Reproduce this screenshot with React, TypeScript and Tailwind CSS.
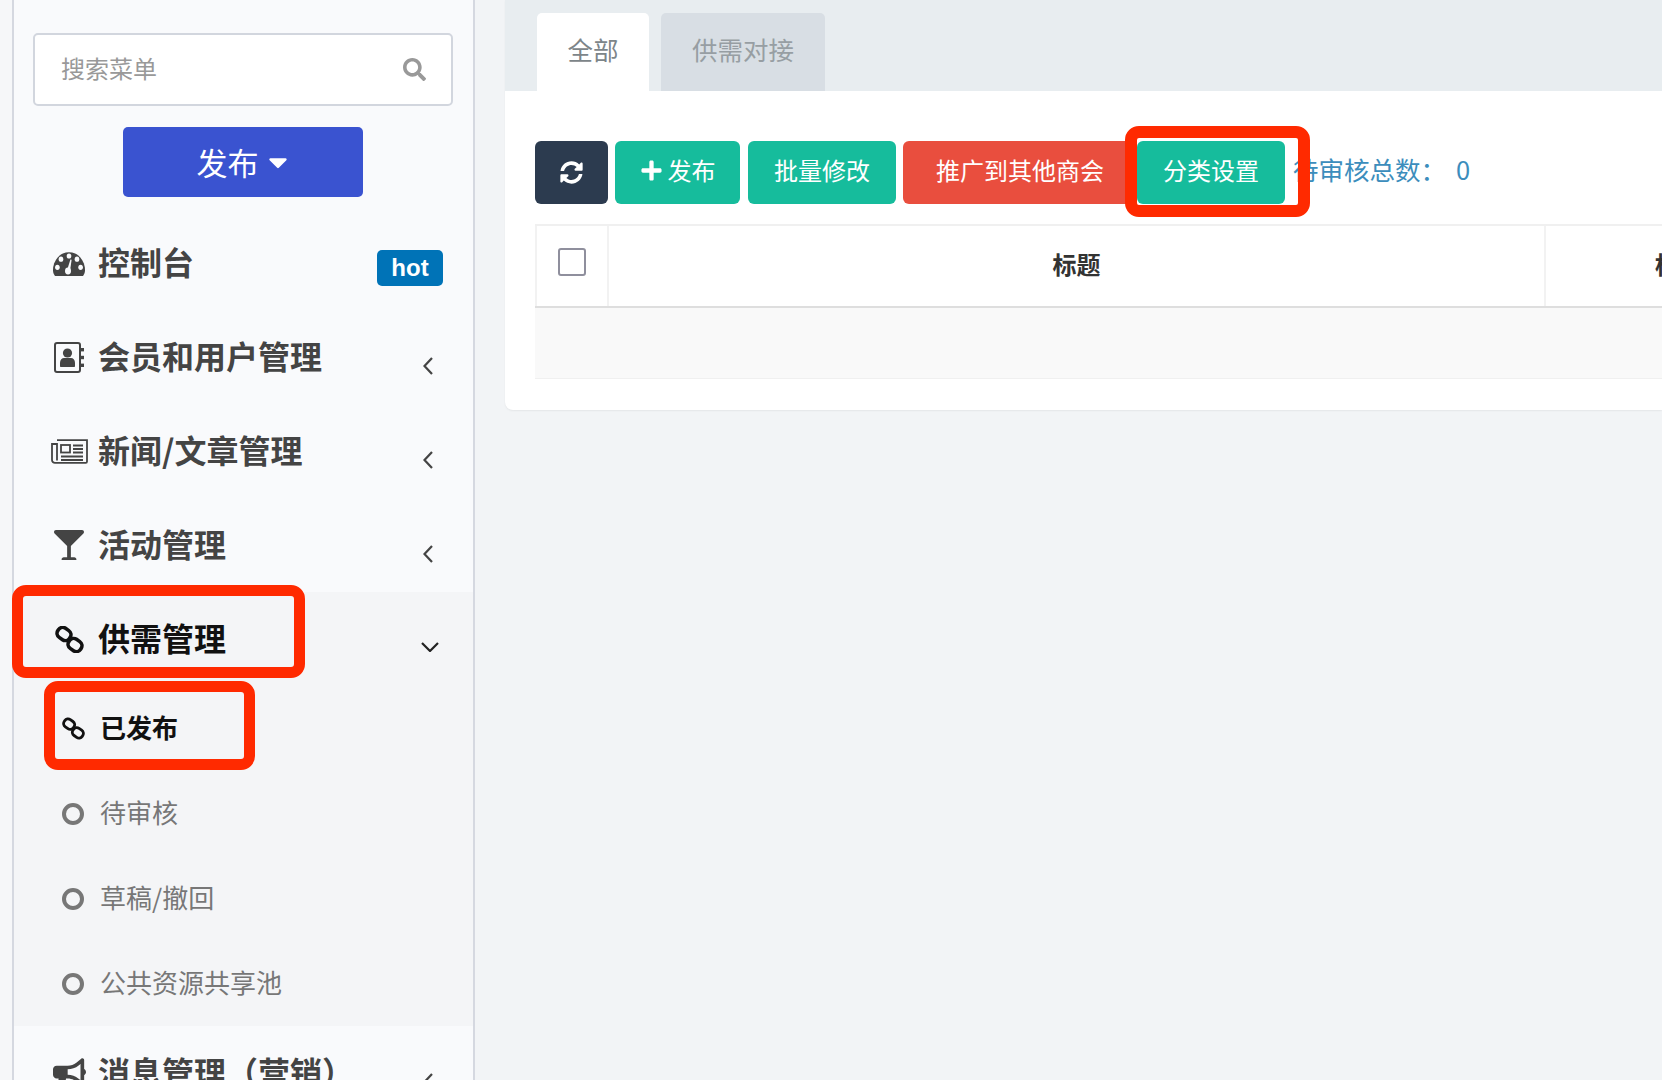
import type { ReactNode } from "react";
import { FaBullhorn, FaCaretDown, FaGlassMartini, FaPlus, FaSearch, FaSyncAlt } from "react-icons/fa";

const font = { fontFamily: '"Noto Sans CJK SC", "Liberation Sans", sans-serif' };

function DashboardIcon() {
  return (
    <svg viewBox="0 0 32 22" preserveAspectRatio="none" className="h-[25px] w-[32px] shrink-0">
      <path d="M0 17A16 16 0 0 1 32 17C32 19 31.4 20.4 30 22H2C.6 20.4 0 19 0 17Z" fill="currentColor" />
      <g fill="#f9fafc">
        <circle cx="16" cy="4.4" r="2.3" />
        <circle cx="8" cy="7.2" r="2.3" />
        <circle cx="24" cy="7.2" r="2.3" />
        <circle cx="4.4" cy="14.4" r="2.3" />
        <circle cx="27.6" cy="14.4" r="2.3" />
        <circle cx="15" cy="17.6" r="3" />
        <path d="M14.2 16.5 17.4 7.4 18.6 7.8 17 17.8Z" />
      </g>
    </svg>
  );
}

function AddressBookIcon() {
  return (
    <svg viewBox="0 0 30 31" className="h-[31px] w-[30px] shrink-0" fill="currentColor">
      <rect x="1" y="1" width="25" height="29" rx="2" fill="none" stroke="currentColor" strokeWidth="2" />
      <rect x="26" y="6" width="4" height="3.4" />
      <rect x="26" y="13.8" width="4" height="3.4" />
      <rect x="26" y="21.6" width="4" height="3.4" />
      <circle cx="13.5" cy="11" r="4.6" />
      <path d="M6 24V20.5C6 17.8 8 16 10 16H17C19 16 21 17.8 21 20.5V24C21 24.6 20.6 25 20 25H7C6.400 25 6 24.600 6 24Z" />
    </svg>
  );
}

function NewspaperIcon() {
  return (
    <svg viewBox="0 0 37 25" className="h-[25px] w-[37px] shrink-0" fill="none" stroke="currentColor" strokeWidth="1.8">
      <path d="M6 1.200H36V22.500C36 23.300 35.400 23.800 34.800 23.800H4C2.200 23.800 1 22.600 1 21V5H6V21.500" />
      <rect x="10" y="6" width="9" height="7.500" />
      <path d="M22 6.500H32M22 10H32M22 13.500H32M10 17.500H32M10 21H32" />
    </svg>
  );
}

function ChainIcon({ className }: { className: string }) {
  return (
    <svg viewBox="0 0 29 27" className={`shrink-0 ${className}`} fill="none" stroke="currentColor" strokeWidth="3.600">
      <rect x="2" y="2.500" width="14" height="11" rx="5" transform="rotate(35 9 8)" />
      <rect x="13" y="13.500" width="14" height="11" rx="5" transform="rotate(35 20 19)" />
    </svg>
  );
}

function NavRow({ icon, label, right, active }: { icon: ReactNode; label: string; right?: ReactNode; active?: boolean }) {
  return (
    <div className={`flex h-[94px] items-center pl-[36px] pr-[30px] ${active ? "text-[#111]" : "text-[#444]"}`}>
      <span className="flex w-[48px] shrink-0 items-center justify-center pr-[10px]">{icon}</span>
      <span className="mt-[-5px] flex-1 text-[32px] leading-none font-bold whitespace-nowrap">{label}</span>
      {right}
    </div>
  );
}

function Angle() {
  return (
    <svg viewBox="0 0 10 18" className="mt-[18px] mr-[10px] h-[18px] w-[10px] shrink-0" fill="none" stroke="#444" strokeWidth="2.200">
      <path d="M9 1 1.500 9 9 17" />
    </svg>
  );
}

function SubRow({ label, active }: { label: string; active?: boolean }) {
  return (
    <div className={`flex h-[85px] items-center pl-[48px] ${active ? "text-[#111]" : "text-[#777]"}`}>
      {active ? (
        <ChainIcon className="h-[23px] w-[23px]" />
      ) : (
        <span className="h-[22px] w-[22px] rounded-full border-[4px] border-[#777]" />
      )}
      <span className={`mt-[-4px] text-[26px] leading-none whitespace-nowrap ${active ? "ml-[15px] font-bold" : "ml-[16px]"}`}>{label}</span>
    </div>
  );
}

function Frame({ className }: { className: string }) {
  return <div className={`pointer-events-none absolute z-20 border-[#ff2a00] ${className}`} />;
}

function ToolButton({ className, children }: { className: string; children: ReactNode }) {
  return (
    <button className={`flex h-[63px] shrink-0 items-center justify-center rounded-[6px] text-[24px] text-white ${className}`}>
      {children}
    </button>
  );
}

export default function App() {
  return (
    <div className="relative flex h-screen w-full overflow-hidden bg-[#f8f9fb]" style={font}>
      <div className="w-[12px] shrink-0 bg-[#f6f7f9]" />

      <aside className="h-full w-[463px] shrink-0 overflow-hidden border-x-2 border-[#d5d8e0] bg-[#f9fafc]">
        <div className="mt-[33px] mr-[20px] ml-[19px] flex h-[73px] items-center rounded-[5px] border-2 border-[#d2d6de] bg-white pr-[25px] pl-[26px]">
          <input
            readOnly
            placeholder="搜索菜单"
            className="min-w-0 flex-1 bg-transparent pb-[4px] text-[24px] outline-none placeholder:text-[#999]"
          />
          <FaSearch className="h-[23px] w-[23px] text-[#999]" />
        </div>

        <div className="mt-[21px] flex justify-center pr-[1px]">
          <button className="flex h-[70px] w-[240px] items-center justify-center rounded-[5px] bg-[#3a53d0] text-[31px] text-white">
            发布
            <FaCaretDown className="ml-[7px] h-[30px] w-[24px]" />
          </button>
        </div>

        <nav className="mt-[19px]">
          <NavRow
            icon={<DashboardIcon />}
            label="控制台"
            right={
              <span className="mt-[10px] flex h-[36px] w-[66px] items-center justify-center rounded-[5px] bg-[#0073b7] text-[24px] font-bold text-white" style={{ fontFamily: '"Liberation Sans", sans-serif' }}>
                hot
              </span>
            }
          />
          <NavRow icon={<AddressBookIcon />} label="会员和用户管理" right={<Angle />} />
          <NavRow icon={<NewspaperIcon />} label="新闻/文章管理" right={<Angle />} />
          <NavRow icon={<FaGlassMartini className="h-[32px] w-[30px]" />} label="活动管理" right={<Angle />} />
          <div className="bg-[#f4f5f7]">
            <NavRow
              active
              icon={<ChainIcon className="h-[27px] w-[29px]" />}
              label="供需管理"
              right={
                <svg viewBox="0 0 18 10" className="mt-[16px] mr-[4px] h-[10px] w-[18px] shrink-0" fill="none" stroke="#222" strokeWidth="2.200">
                  <path d="M1 1 9 9 17 1" />
                </svg>
              }
            />
            <SubRow active label="已发布" />
            <SubRow label="待审核" />
            <SubRow label="草稿/撤回" />
            <SubRow label="公共资源共享池" />
          </div>
          <NavRow icon={<FaBullhorn className="h-[30px] w-[33px]" />} label="消息管理（营销）" right={<Angle />} />
        </nav>
      </aside>

      <main className="min-w-0 flex-1 bg-[#f2f4f6] pl-[30px]">
        <div className="w-[1157px] rounded-bl-[8px] bg-white shadow-[0_1px_2px_rgba(0,0,0,0.06)]">
          <div className="flex h-[91px] items-end gap-[12px] bg-[#e8edf0] pl-[32px]">
            <div className="flex h-[78px] w-[112px] items-center justify-center rounded-t-[5px] bg-white pb-[6px] text-[25.5px] text-[#7d8589]">全部</div>
            <div className="flex h-[78px] w-[164px] items-center justify-center rounded-t-[5px] bg-[#d8dee4] pb-[6px] text-[25.5px] text-[#979ea3]">供需对接</div>
          </div>

          <div className="pt-[50px] pb-[31px] pl-[30px]">
            <div className="flex items-center whitespace-nowrap">
              <ToolButton className="w-[73px] bg-[#2c3b4f]">
                <FaSyncAlt className="h-[23px] w-[23px]" />
              </ToolButton>
              <ToolButton className="ml-[7px] w-[125px] bg-[#16bc9c] pb-[5px]">
                <FaPlus className="mr-[5px] h-[23px] w-[23px]" />
                发布
              </ToolButton>
              <ToolButton className="ml-[8px] w-[148px] bg-[#16bc9c] pb-[5px]">批量修改</ToolButton>
              <ToolButton className="ml-[7px] w-[234px] bg-[#e94e3e] pb-[5px]">推广到其他商会</ToolButton>
              <ToolButton className="w-[148px] bg-[#16bc9c] pb-[5px]">分类设置</ToolButton>
              <span className="mt-[-7px] ml-[8px] text-[25.500px] text-[#3c8dbc]">
                待审核总数：<span className="ml-[10px]">0</span>
              </span>
            </div>

            <div className="mt-[20px] w-[1137px] overflow-hidden border-t-2 border-b border-[#f0f0f0]">
              <div className="flex h-[82px] border-b-2 border-[#dedede] text-[24px] font-bold text-[#333]">
                <div className="flex w-[74px] shrink-0 items-center justify-center border-x-2 border-[#f2f2f2]">
                  <span className="mb-[8px] h-[28px] w-[28px] rounded-[3px] border-2 border-[#8f8f9d] bg-white" />
                </div>
                <div className="flex w-[937px] shrink-0 items-center justify-center border-r-2 border-[#f2f2f2] pb-[4px]">标题</div>
                <div className="flex w-[266px] shrink-0 items-center justify-center pb-[4px]">标题</div>
              </div>
              <div className="h-[70px] bg-[#f9f9f9]" />
            </div>
          </div>
        </div>
      </main>

      <Frame className="top-[585px] left-[12px] h-[93px] w-[293px] rounded-[14px] border-[11px]" />
      <Frame className="top-[681px] left-[44px] h-[89px] w-[211px] rounded-[14px] border-[11px]" />
      <Frame className="top-[126px] left-[1125px] h-[91px] w-[185px] rounded-[14px] border-[12px]" />
    </div>
  );
}
